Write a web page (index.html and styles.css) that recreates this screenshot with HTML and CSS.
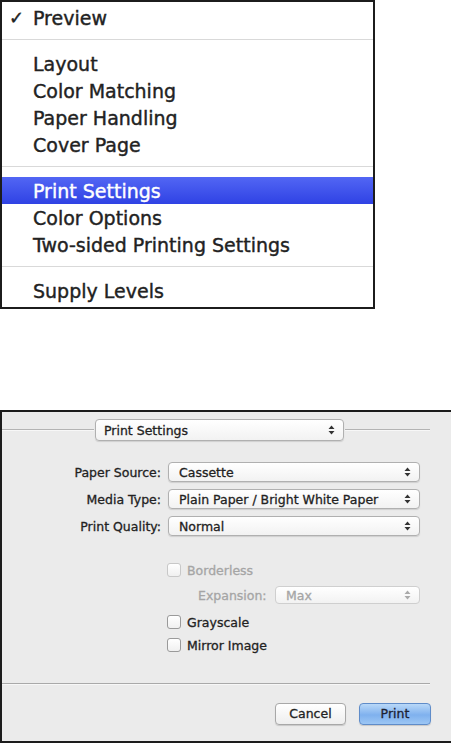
FILE: index.html
```html
<!DOCTYPE html>
<html lang="en">
<head>
  <meta charset="UTF-8" />
  <title>Print Settings</title>
  <link rel="stylesheet" href="styles.css">
</head>
<body>
  <!-- pop-up menu of panes -->
  <div class="menu">
    <div class="item"><span class="tick">✓</span>Preview</div>
    <div class="sep"></div>
    <div class="item"><span class="tick"></span>Layout</div>
    <div class="item"><span class="tick"></span>Color Matching</div>
    <div class="item"><span class="tick"></span>Paper Handling</div>
    <div class="item"><span class="tick"></span>Cover Page</div>
    <div class="sep"></div>
    <div class="item selected"><span class="tick"></span>Print Settings</div>
    <div class="item"><span class="tick"></span>Color Options</div>
    <div class="item"><span class="tick"></span>Two-sided Printing Settings</div>
    <div class="sep"></div>
    <div class="item"><span class="tick"></span>Supply Levels</div>
  </div>

  <!-- print dialog -->
  <div class="dialog">
    <div class="dlg-head">
      <span class="rule"></span>
      <div class="popup head-popup">Print Settings
        <svg class="arrows" width="7" height="10" viewBox="0 0 7 10"><path d="M3.5 0.5 L6.5 4 H0.5 Z M3.5 9.5 L6.5 6 H0.5 Z" fill="#333"/></svg>
      </div>
      <span class="rule right"></span>
    </div>

    <div class="form">
      <div class="lbl">Paper Source:</div>
      <div class="popup">Cassette
        <svg class="arrows" width="7" height="10" viewBox="0 0 7 10"><path d="M3.5 0.5 L6.5 4 H0.5 Z M3.5 9.5 L6.5 6 H0.5 Z" fill="#333"/></svg>
      </div>
      <div class="lbl">Media Type:</div>
      <div class="popup">Plain Paper / Bright White Paper
        <svg class="arrows" width="7" height="10" viewBox="0 0 7 10"><path d="M3.5 0.5 L6.5 4 H0.5 Z M3.5 9.5 L6.5 6 H0.5 Z" fill="#333"/></svg>
      </div>
      <div class="lbl">Print Quality:</div>
      <div class="popup">Normal
        <svg class="arrows" width="7" height="10" viewBox="0 0 7 10"><path d="M3.5 0.5 L6.5 4 H0.5 Z M3.5 9.5 L6.5 6 H0.5 Z" fill="#333"/></svg>
      </div>
    </div>

    <div class="opts">
      <div class="check off"><span class="box"></span>Borderless</div>
      <div class="expansion off">
        <span class="lbl">Expansion:</span>
        <div class="popup small">Max
          <svg class="arrows" width="7" height="10" viewBox="0 0 7 10"><path d="M3.5 0.5 L6.5 4 H0.5 Z M3.5 9.5 L6.5 6 H0.5 Z" fill="#aaa"/></svg>
        </div>
      </div>
      <div class="check"><span class="box"></span>Grayscale</div>
      <div class="check"><span class="box"></span>Mirror Image</div>
    </div>

    <div class="divider"></div>

    <div class="buttons">
      <div class="btn">Cancel</div>
      <div class="btn default">Print</div>
    </div>
  </div>
</body>
</html>
```

FILE: styles.css
```css
body {
  margin: 0;
  width: 451px;
  height: 745px;
  overflow: hidden;
  background: #fff;
  color: #222;
  font-family: "DejaVu Sans", Verdana, sans-serif;
}

/* menu */
.menu {
  width: 371px;
  border: 2px solid #1c1c1c;
  padding: 2px 0 3px;
  font-size: 19px;
  -webkit-text-stroke: 0.4px currentColor;
}

.item {
  display: flex;
  align-items: center;
  height: 27px;
  padding-left: 7px;
}

.tick {
  width: 24px;
  font-size: 18px;
}

.item.selected {
  background: linear-gradient(#5266f4, #2f42e4);
  color: #fff;
}

.sep {
  height: 1px;
  margin: 8px 0 10px;
  background: #d9d9d9;
}

/* dialog */
.dialog {
  margin-top: 101px;
  height: 329px;
  border: 2px solid #1c1c1c;
  border-right: none;
  background: #ebebeb;
  font-size: 12.5px;
  -webkit-text-stroke: 0.3px currentColor;
}

.dlg-head {
  display: flex;
  align-items: center;
  padding-top: 7px;
  margin-right: 21px;
}

.rule {
  flex: 1;
  height: 1px;
  background: #b4b4b4;
  border-bottom: 1px solid #f7f7f7;
}

.rule.right {
  flex: none;
  width: 85px;
}

.popup {
  display: flex;
  align-items: center;
  justify-content: space-between;
  box-sizing: border-box;
  height: 20px;
  padding: 0 8px 0 10px;
  background: linear-gradient(#ffffff, #f2f2f2);
  border: 1px solid #b0b0b0;
  border-radius: 4px;
  box-shadow: 0 1px 1px rgba(0, 0, 0, 0.12);
}

.arrows {
  -webkit-text-stroke: 0;
}

.head-popup {
  width: 249px;
  height: 22px;
  margin: 0 1px;
  padding-left: 8px;
}

.form {
  display: grid;
  grid-template-columns: 159px 252px;
  column-gap: 7px;
  row-gap: 7px;
  margin-top: 21px;
}

.form .lbl {
  text-align: right;
  align-self: center;
}

.opts {
  display: flex;
  flex-direction: column;
  margin-top: 25px;
  padding-left: 165px;
}

.check {
  display: flex;
  align-items: center;
  height: 18px;
  margin-bottom: 5px;
}

.box {
  box-sizing: border-box;
  width: 14px;
  height: 14px;
  margin-right: 6px;
  background: linear-gradient(#fff, #f0f0f0);
  border: 1px solid #9a9a9a;
  border-radius: 3px;
}

.off {
  color: #a5a5a5;
}

.off .box {
  border-color: #c8c8c8;
}

.check.off {
  margin-bottom: 7px;
}

.expansion {
  display: flex;
  align-items: center;
  height: 18px;
  padding-left: 31px;
  margin-bottom: 9px;
}

.expansion .lbl {
  width: 66px;
  text-align: right;
  margin-right: 11px;
}

.popup.small {
  width: 145px;
  height: 18px;
  color: #a5a5a5;
  border-color: #cfcfcf;
  box-shadow: none;
}

.divider {
  height: 1px;
  margin: 24px 21px 0 0;
  background: #a9a9a9;
  border-bottom: 1px solid #f7f7f7;
}

.buttons {
  display: flex;
  justify-content: flex-end;
  gap: 13px;
  margin: 18px 20px 0 0;
}

.btn {
  box-sizing: border-box;
  width: 71px;
  height: 22px;
  line-height: 20px;
  text-align: center;
  background: linear-gradient(#ffffff, #eeeeee);
  border: 1px solid #a8a8a8;
  border-radius: 4px;
  box-shadow: 0 1px 1px rgba(0, 0, 0, 0.15);
}

.btn.default {
  width: 72px;
  background: linear-gradient(#b9d8f8, #7fb1ee 55%, #9cc6f4);
  border-color: #5f8cc9;
  color: #1d2233;
}
```
